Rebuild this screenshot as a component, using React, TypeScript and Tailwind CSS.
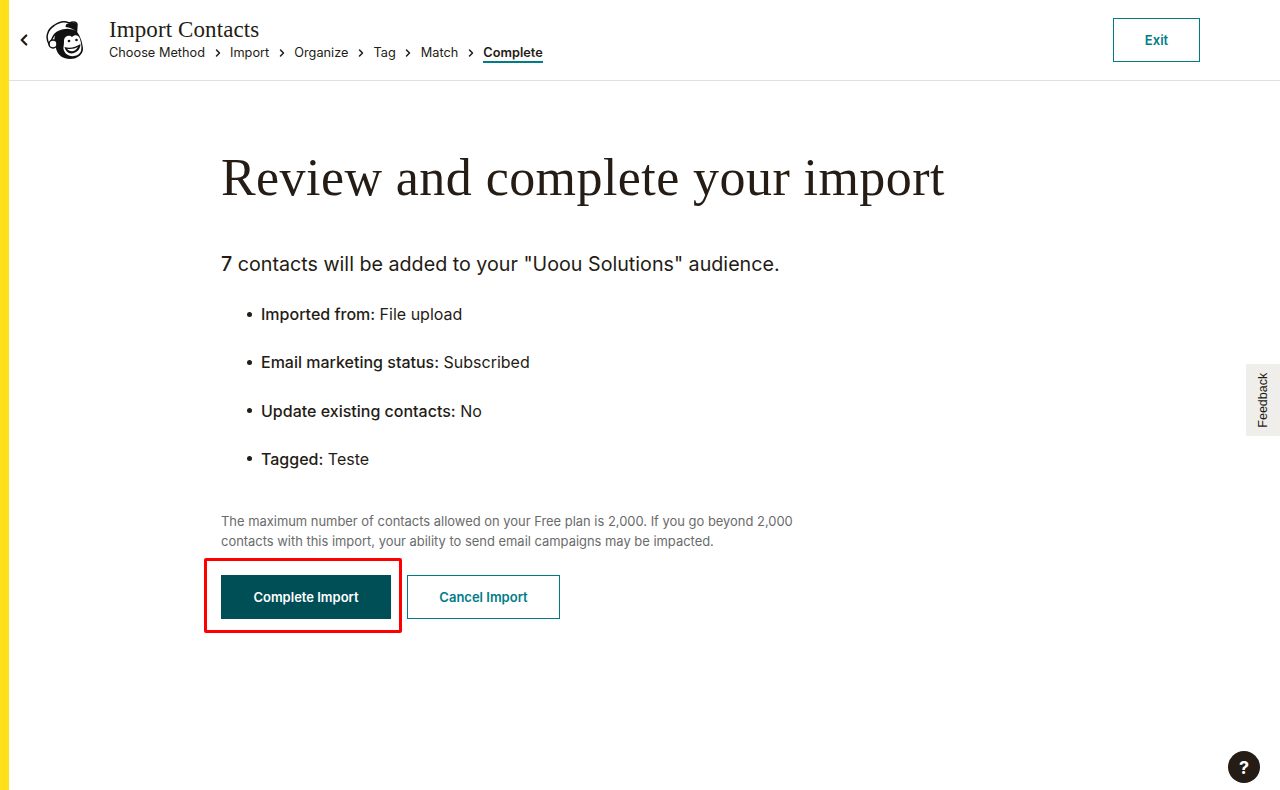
import { ChevronLeft, ChevronRight } from 'lucide-react'

const SANS = 'font-["Inter","Liberation_Sans",sans-serif]'

const STEPS = ['Choose Method', 'Import', 'Organize', 'Tag', 'Match']

const DETAILS = [
  { label: 'Imported from:', value: 'File upload' },
  { label: 'Email marketing status:', value: 'Subscribed' },
  { label: 'Update existing contacts:', value: 'No' },
  { label: 'Tagged:', value: 'Teste' },
]

function Freddie() {
  return (
    <svg width="38" height="40" viewBox="0 0 38 40" fill="none">
      {/* head */}
      <path d="M9 14C14 8 24 6 30 11c4 4 6 10 7 17 .5 6-5 11-13 11-7 0-12-4-13.500-9L8 22z" fill="#111" />
      {/* hat */}
      <path d="M3.500 25C-1 18 1 10 8 5.500 13 2 19 1 23 3c3-1 7-1.500 8 1l-.5 8C24 8 14 9 9 14c-2.500 3-4 7-5.500 11z" fill="#fff" stroke="#111" strokeWidth="1.500" />
      <path d="M20 4.500c4-2 9-2.500 11-.5l-.5 8c-3-3-7-4.500-11-5z" fill="#111" />
      {/* ear */}
      <circle cx="7" cy="24" r="4" fill="#fff" stroke="#111" strokeWidth="1.500" />
      {/* face */}
      <path d="M18 20c1-5 6-5 8-3 3-3 7-2 8 2 1 4 2 8 1 12-2 5-8 6-12 4.500-4-1.500-6-5.500-5.500-8.500.5-3 .5-5 .5-7z" fill="#fff" />
      <circle cx="23" cy="21" r="1.300" fill="#111" />
      <circle cx="30.500" cy="20" r="1.300" fill="#111" />
      <path d="M18.500 27c5 1.500 11 .5 16-3 0 6-5 9.500-9 9.500-4 0-6-3-7-6.500z" fill="#111" />
      <path d="M21 28.800c4 .7 8 0 11-2-1.500 3-4 4.500-6 4.500-2.200 0-4-1-5-2.500z" fill="#fff" />
    </svg>
  )
}

export default function App() {
  return (
    <div className={`relative h-[790px] w-[1280px] overflow-hidden bg-white text-[#241c15] ${SANS}`}>
      <div className="flex h-full">
        <div className="w-[9px] shrink-0 bg-[#ffe01b]" />
        <div className="flex min-w-0 flex-1 flex-col">
          {/* Top bar */}
          <header className="flex h-[81px] items-center border-b border-[#e0e0e0] pl-[6px] pr-[80px]">
            <ChevronLeft size={18} strokeWidth={3} className="shrink-0" />
            <div className="ml-[13px] shrink-0">
              <Freddie />
            </div>
            <div className="ml-[25px] flex flex-col">
              <h1 className='font-["Liberation_Serif",serif] text-[23px] leading-[25px] tracking-[0.1px]'>Import Contacts</h1>
              <nav className="mt-[2px] flex h-[19px] items-start text-[12.750px] leading-[18px]">
                {STEPS.map(step => (
                  <span key={step} className="flex items-center">
                    {step}
                    <ChevronRight size={12} strokeWidth={3} className="mx-[6.500px]" />
                  </span>
                ))}
                <span className="border-b-2 border-[#007c89] font-semibold leading-[17px]">Complete</span>
              </nav>
            </div>
            <button className="ml-auto h-[44px] w-[87px] border border-[#007c89] pt-[1px] text-[13px] font-semibold text-[#007c89]">
              Exit
            </button>
          </header>

          {/* Content */}
          <main className="flex flex-col pl-[212px] pt-[66px]">
            <h2 className='font-["Liberation_Serif",serif] text-[52px] leading-[62px] tracking-[0.43px]'>
              Review and complete your import
            </h2>

            <p className="mt-[40px] text-[19.700px] leading-[30px]">
              <span className="font-medium">7</span> contacts will be added to your "Uoou Solutions" audience.
            </p>

            <ul className="mt-[23px] flex flex-col gap-[24.330px] pl-[26px] text-[16px] leading-[24px]">
              {DETAILS.map(d => (
                <li key={d.label} className="flex items-center">
                  <span className="mr-[9px] h-[5px] w-[5px] rounded-full bg-[#241c15]" />
                  <span className="mr-[4.500px] font-medium">{d.label}</span>
                  {d.value}
                </li>
              ))}
            </ul>

            <p className="mt-[40px] w-[590px] text-[12.930px] leading-[20px] text-[#6b6b6b]">
              The maximum number of contacts allowed on your Free plan is 2,000. If you go beyond 2,000 contacts with this import, your ability to send email campaigns may be impacted.
            </p>

            <div className="relative mt-[24px] flex gap-[16px]">
              <button className="h-[44px] w-[170px] bg-[#004e56] pt-[1px] text-[13px] font-semibold text-white">
                Complete Import
              </button>
              <button className="h-[44px] w-[153px] border border-[#007c89] pt-[1px] text-[13px] font-semibold text-[#007c89]">
                Cancel Import
              </button>
              {/* Annotation drawn over the screenshot */}
              <div className="absolute -left-[17px] -top-[17px] h-[75px] w-[198px] rounded-[2px] border-[3px] border-[#fe0000]" />
            </div>
          </main>
        </div>
      </div>

      <div className="absolute right-0 top-[364px] flex h-[72px] w-[34px] items-center justify-center bg-[#efeeea]">
        <span className='-rotate-90 font-["Liberation_Sans",sans-serif] text-[12.500px] leading-none'>Feedback</span>
      </div>

      <div className="absolute bottom-[7px] left-[1228px] flex h-[32px] w-[32px] items-center justify-center rounded-full bg-[#241c15] text-[18px] font-bold text-white">
        ?
      </div>
    </div>
  )
}
